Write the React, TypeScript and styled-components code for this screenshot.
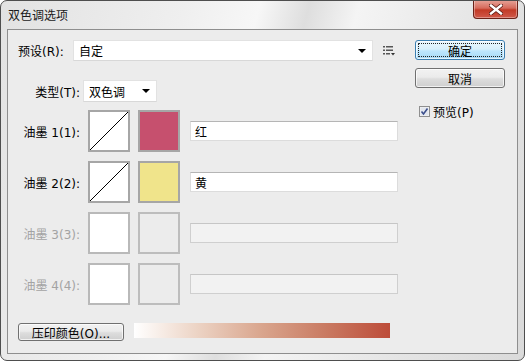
import styled, { createGlobalStyle } from 'styled-components'

const GlobalStyle = createGlobalStyle`
  html, body {
    margin: 0;
    padding: 0;
    background: #ffffff;
  }
  body {
    font-family: "DejaVu Sans", "Noto Sans CJK SC", sans-serif;
    font-size: 12px;
    color: #000;
  }
`

const Window = styled.div`
  box-sizing: border-box;
  width: 525px;
  height: 361px;
  display: flex;
  flex-direction: column;
  padding: 0 6px 6px 6px;
  border: 1px solid #4e4e4e;
  border-radius: 7px;
  background: linear-gradient(
    105deg,
    #e2e2e2 0%,
    #efefef 30%,
    #f7f7f7 42%,
    #dedede 50%,
    #f4f4f4 58%,
    #e4e4e4 80%,
    #dadada 100%
  );
  overflow: hidden;
`

const TitleBar = styled.div`
  height: 28px;
  display: flex;
  align-items: flex-start;
  justify-content: space-between;
`

const Title = styled.div`
  font-family: "Noto Sans CJK SC", sans-serif;
  font-size: 12px;
  line-height: 28px;
  padding-left: 1px;
  color: #1a1a1a;
`

const CloseButton = styled.div`
  width: 45px;
  height: 19px;
  margin-top: -1px;
  box-sizing: border-box;
  display: flex;
  align-items: center;
  justify-content: center;
  border: 1px solid #6b2218;
  border-top: none;
  border-radius: 0 0 4px 4px;
  background: linear-gradient(#e7a59a 0%, #d66b5c 45%, #c23a26 55%, #d0594a 100%);
  box-shadow: inset 0 0 0 1px rgba(255, 255, 255, 0.35);
`

const Client = styled.div`
  flex: 1;
  display: flex;
  border: 1px solid #8e8e8e;
  background: #ececec;
`

const Main = styled.div`
  box-sizing: border-box;
  width: 407px;
  padding: 10px 0 0 10px;
  display: flex;
  flex-direction: column;
`

const Side = styled.div`
  width: 90px;
  padding-top: 10px;
  display: flex;
  flex-direction: column;
  gap: 8px;
`

const Row = styled.div`
  display: flex;
  align-items: center;
`

const PresetRow = styled(Row)`
  height: 21px;
`

const TypeRow = styled(Row)`
  height: 22px;
  margin-top: 19px;
`

const Label = styled.span<{ $width: number; $right?: boolean; $disabled?: boolean }>`
  width: ${p => p.$width}px;
  flex-shrink: 0;
  text-align: ${p => (p.$right ? 'right' : 'left')};
  color: ${p => (p.$disabled ? '#a3a3a3' : '#000')};
  white-space: nowrap;
`

const Select = styled.div<{ $width: number; $gap: number }>`
  box-sizing: border-box;
  width: ${p => p.$width}px;
  height: 100%;
  margin-left: ${p => p.$gap}px;
  padding: 0 6px 0 5px;
  display: flex;
  align-items: center;
  justify-content: space-between;
  background: #fff;
  border: 1px solid #e2e2e2;
  border-bottom-color: #d8d8d8;
`

const Arrow = styled.span`
  width: 0;
  height: 0;
  border-left: 4px solid transparent;
  border-right: 4px solid transparent;
  border-top: 4px solid #000;
`

const MenuIcon = styled.svg`
  margin-left: 10px;
  flex-shrink: 0;
`

const InkList = styled.div`
  margin-top: 8px;
  display: flex;
  flex-direction: column;
  gap: 9px;
`

const InkRow = styled(Row)`
  height: 42px;
`

const CurveBox = styled.div<{ $disabled?: boolean }>`
  box-sizing: border-box;
  width: 42px;
  height: 42px;
  margin-left: 8px;
  background: #fff;
  border: 2px solid ${p => (p.$disabled ? '#b9b9b9' : '#a6a6a6')};
  display: flex;
`

const Swatch = styled.div<{ $color: string; $disabled?: boolean }>`
  box-sizing: border-box;
  width: 42px;
  height: 42px;
  margin-left: 8px;
  background: ${p => p.$color};
  border: 2px solid ${p => (p.$disabled ? '#bdbdbd' : '#a6a6a6')};
`

const NameField = styled.div<{ $disabled?: boolean }>`
  box-sizing: border-box;
  width: 208px;
  height: 20px;
  margin-left: 10px;
  padding-left: 4px;
  display: flex;
  align-items: center;
  font-family: "Noto Sans CJK SC", sans-serif;
  background: ${p => (p.$disabled ? '#f2f2f2' : '#fff')};
  border: 1px solid ${p => (p.$disabled ? '#cfcfcf' : '#dcdcdc')};
  border-top-color: ${p => (p.$disabled ? '#c6c6c6' : '#b5b5b5')};
`

const BottomRow = styled(Row)`
  margin-top: 18px;
  height: 18px;
  align-items: flex-start;
`

const Button = styled.div<{ $default?: boolean; $width?: number; $height?: number }>`
  box-sizing: border-box;
  width: ${p => (p.$width ? `${p.$width}px` : '100%')};
  height: ${p => p.$height ?? 20}px;
  display: flex;
  align-items: center;
  justify-content: center;
  border-radius: 3px;
  border: 1px solid ${p => (p.$default ? '#3c7fb1' : '#707070')};
  background: ${p =>
    p.$default
      ? 'linear-gradient(#eaf6fd 0%, #d9f0fc 45%, #bee6fd 55%, #a7d9f5 100%)'
      : 'linear-gradient(#f2f2f2 0%, #ebebeb 45%, #dddddd 55%, #cfcfcf 100%)'};
  box-shadow: inset 0 0 0 1px rgba(255, 255, 255, 0.7);
  position: relative;
`

const FocusRing = styled.span`
  position: absolute;
  inset: 2px;
  border: 1px dotted #222;
  border-radius: 1px;
`

const ButtonText = styled.span`
  position: relative;
`

const Gradient = styled.div`
  width: 256px;
  height: 15px;
  margin-left: 10px;
  background: linear-gradient(90deg, #ffffff 0%, #ecd3c4 25%, #d9a58d 50%, #c97a62 75%, #bd4c39 100%);
`

const Check = styled(Row)`
  margin-top: 7px;
  margin-left: 4px;
  gap: 3px;
`

const CheckBox = styled.svg`
  flex-shrink: 0;
`

const inks = [
  { label: '油墨 1(1):', color: '#c6506e', name: '红', active: true },
  { label: '油墨 2(2):', color: '#f0e48b', name: '黄', active: true },
  { label: '油墨 3(3):', color: '#ececec', name: '', active: false },
  { label: '油墨 4(4):', color: '#ececec', name: '', active: false },
]

const App = () => (
  <>
    <GlobalStyle />
    <Window>
      <TitleBar>
        <Title>双色调选项</Title>
        <CloseButton>
          <svg width="14" height="11" viewBox="0 0 14 11">
            <path d="M2 1.5 L12 9.5 M12 1.5 L2 9.5" stroke="#5a1a12" strokeWidth="4" strokeLinecap="square" />
            <path d="M2 1.5 L12 9.5 M12 1.5 L2 9.5" stroke="#ffffff" strokeWidth="2.4" strokeLinecap="square" />
          </svg>
        </CloseButton>
      </TitleBar>
      <Client>
        <Main>
          <PresetRow>
            <Label $width={55}>预设(R):</Label>
            <Select $width={300} $gap={0}>
              <span>自定</span>
              <Arrow />
            </Select>
            <MenuIcon width="12" height="10" viewBox="0 0 12 10">
              <rect x="0" y="0" width="2" height="1.5" fill="#555" />
              <rect x="3" y="0" width="7" height="1.5" fill="#555" />
              <rect x="0" y="3.5" width="2" height="1.5" fill="#555" />
              <rect x="3" y="3.5" width="7" height="1.5" fill="#555" />
              <rect x="0" y="7" width="2" height="1.5" fill="#555" />
              <rect x="3" y="7" width="4" height="1.5" fill="#555" />
              <path d="M8 7 L12 7 L10 9.5 Z" fill="#333" />
            </MenuIcon>
          </PresetRow>

          <TypeRow>
            <Label $width={62} $right>类型(T):</Label>
            <Select $width={74} $gap={3}>
              <span>双色调</span>
              <Arrow />
            </Select>
          </TypeRow>

          <InkList>
            {inks.map(ink => (
              <InkRow key={ink.label}>
                <Label $width={62} $right $disabled={!ink.active}>
                  {ink.label}
                </Label>
                <CurveBox $disabled={!ink.active}>
                  {ink.active && (
                    <svg width="38" height="38" viewBox="0 0 38 38">
                      <path d="M0 38 L38 0" stroke="#000" strokeWidth="1" />
                    </svg>
                  )}
                </CurveBox>
                <Swatch $color={ink.color} $disabled={!ink.active} />
                <NameField $disabled={!ink.active}>{ink.name}</NameField>
              </InkRow>
            ))}
          </InkList>

          <BottomRow>
            <Button $width={106} $height={18}>
              <ButtonText>压印颜色(O)...</ButtonText>
            </Button>
            <Gradient />
          </BottomRow>
        </Main>

        <Side>
          <Button $default>
            <FocusRing />
            <ButtonText>确定</ButtonText>
          </Button>
          <Button>
            <ButtonText>取消</ButtonText>
          </Button>
          <Check>
            <CheckBox width="11" height="11" viewBox="0 0 11 11">
              <rect x="0.5" y="0.5" width="10" height="10" fill="#f4f4f4" stroke="#8f8f8f" />
              <rect x="1.5" y="1.5" width="8" height="8" fill="#e2e6ee" />
              <path d="M2.5 5.5 L4.5 8 L8.5 2.5" stroke="#3c4f8c" strokeWidth="1.6" fill="none" />
            </CheckBox>
            <span>预览(P)</span>
          </Check>
        </Side>
      </Client>
    </Window>
  </>
)

export default App
